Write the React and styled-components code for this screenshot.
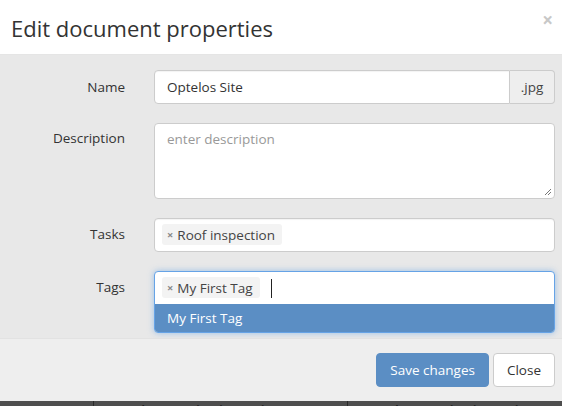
// modules
import React from "react";
import styled, { createGlobalStyle } from "styled-components";

//styles
const GlobalStyle = createGlobalStyle`
  html, body {
    margin: 0;
    padding: 0;
    background: #4b4b4b;
    overflow: hidden;
  }
  body {
    font-family: "Open Sans", "Liberation Sans", sans-serif;
    color: #333;
  }
`;

const Page = styled.div`
  width: 562px;
  height: 406px;
  overflow: hidden;
  display: flex;
  flex-direction: column;
`;

const Modal = styled.div`
  background: #fff;
  display: flex;
  flex-direction: column;
  box-shadow: 0 3px 9px rgba(0, 0, 0, 0.5);
`;

const Header = styled.div`
  height: 55px;
  display: flex;
  align-items: center;
  justify-content: space-between;
  padding: 0 9px 0 11px;
  border-bottom: 1px solid #e5e5e5;
  box-sizing: border-box;
`;

const Title = styled.h4`
  margin: 0;
  font-size: 22px;
  font-weight: 400;
  color: #333;
  padding-top: 2px;
`;

const CloseX = styled.span`
  font-size: 19px;
  font-weight: 700;
  color: #c8c8c8;
  align-self: flex-start;
  margin-top: 7px;
`;

const Body = styled.div`
  background: #e8e8e8;
  padding: 15px 7px 5px 0;
  display: flex;
  flex-direction: column;
  gap: 19px;
`;

const Row = styled.div`
  display: grid;
  grid-template-columns: 126px 1fr;
  column-gap: 28px;
  align-items: start;
`;

const Label = styled.label`
  text-align: right;
  font-size: 13.5px;
  line-height: 20px;
  padding-top: ${(p) => (p.$top === undefined ? 6 : p.$top)}px;
  padding-right: 1px;
`;

const InputGroup = styled.div`
  display: flex;
  height: 34px;
`;

const TextInput = styled.div`
  flex: 1;
  background: #fff;
  border: 1px solid #ccc;
  border-radius: ${(p) => (p.$addon ? "4px 0 0 4px" : "4px")};
  padding: 0 12px;
  display: flex;
  align-items: center;
  font-size: 13.5px;
  color: #333;
  box-shadow: inset 0 1px 1px rgba(0, 0, 0, 0.05);
`;

const Addon = styled.div`
  width: 44px;
  background: #eee;
  border: 1px solid #ccc;
  border-left: none;
  border-radius: 0 4px 4px 0;
  display: flex;
  align-items: center;
  justify-content: center;
  font-size: 13.5px;
  color: #444;
`;

const TextArea = styled.div`
  position: relative;
  height: 76px;
  background: #fff;
  border: 1px solid #ccc;
  border-radius: 4px;
  padding: 5px 12px;
  box-sizing: border-box;
  font-size: 13.5px;
  line-height: 20px;
  color: #999;
`;

const Grip = styled.svg`
  position: absolute;
  right: 2px;
  bottom: 2px;
`;

const TagBox = styled.div`
  background: #fff;
  border: 1px solid ${(p) => (p.$focus ? "#66a3e6" : "#ccc")};
  border-radius: 4px;
  box-shadow: ${(p) =>
    p.$focus ? "0 0 6px rgba(102, 163, 230, 0.6)" : "inset 0 1px 1px rgba(0,0,0,0.05)"};
  overflow: hidden;
`;

const TagLine = styled.div`
  height: 32px;
  display: flex;
  align-items: center;
  padding: 0 7px;
  gap: 11px;
`;

const Chip = styled.span`
  display: inline-flex;
  align-items: center;
  gap: 4px;
  background: #f3f3f3;
  border-radius: 3px;
  height: 21px;
  padding: 0 7px 0 5px;
  margin-top: -1px;
  font-size: 13.5px;
  color: #444;
`;

const ChipX = styled.span`
  font-size: 11px;
  font-weight: 700;
  color: #888;
`;

const Caret = styled.span`
  width: 1px;
  height: 19px;
  background: #222;
`;

const Option = styled.div`
  height: 28px;
  background: #5b8ec4;
  color: #fff;
  font-size: 13.5px;
  display: flex;
  align-items: center;
  padding: 0 12px;
`;

const Footer = styled.div`
  background: #eee;
  border-top: 1px solid #e2e2e2;
  height: 62px;
  display: flex;
  justify-content: flex-end;
  align-items: center;
  gap: 4px;
  padding: 0 7px 0 0;
`;

const Button = styled.button`
  height: 34px;
  padding: 0 13px;
  font-family: inherit;
  font-size: 13.5px;
  border-radius: 4px;
  border: 1px solid ${(p) => (p.$primary ? "#5b8ec4" : "#ccc")};
  background: ${(p) => (p.$primary ? "#5b8ec4" : "#fff")};
  color: ${(p) => (p.$primary ? "#fff" : "#333")};
`;

const Backdrop = styled.div`
  flex: 1;
  display: flex;
  background: #4e4e4e;
  overflow: hidden;
`;

const BackCell = styled.div`
  width: ${(p) => p.$w}px;
  border-left: ${(p) => (p.$line ? "1px solid #2a2a2a" : "none")};
  padding-left: ${(p) => p.$pad || 0}px;
  font-size: 14px;
  font-weight: 600;
  line-height: 20px;
  color: #1e1e1e;
  white-space: nowrap;
`;

export default function App() {
  return (
    <Page>
      <GlobalStyle />
      <Modal>
        <Header>
          <Title>Edit document properties</Title>
          <CloseX>×</CloseX>
        </Header>
        <Body>
          <Row>
            <Label $top={7}>Name</Label>
            <InputGroup>
              <TextInput $addon>Optelos Site</TextInput>
              <Addon>.jpg</Addon>
            </InputGroup>
          </Row>
          <Row>
            <Label $top={5}>Description</Label>
            <TextArea>
              enter description
              <Grip width="9" height="9" viewBox="0 0 9 9">
                <path d="M8 2 L2 8 M8 5 L5 8" stroke="#777" strokeWidth="1" />
              </Grip>
            </TextArea>
          </Row>
          <Row>
            <Label>Tasks</Label>
            <TagBox>
              <TagLine>
                <Chip>
                  <ChipX>×</ChipX>Roof inspection
                </Chip>
              </TagLine>
            </TagBox>
          </Row>
          <Row>
            <Label>Tags</Label>
            <TagBox $focus>
              <TagLine>
                <Chip>
                  <ChipX>×</ChipX>My First Tag
                </Chip>
                <Caret />
              </TagLine>
              <Option>My First Tag</Option>
            </TagBox>
          </Row>
        </Body>
        <Footer>
          <Button $primary>Save changes</Button>
          <Button>Close</Button>
        </Footer>
      </Modal>
      <Backdrop>
        <BackCell $w={105} />
        <BackCell $w={250} $line $pad={31}>
          Telecom Dig Site-12.jpg
        </BackCell>
        <BackCell $w={206} $line $pad={31}>
          Telecom Dig Site-12.jpg
        </BackCell>
      </Backdrop>
    </Page>
  );
}
